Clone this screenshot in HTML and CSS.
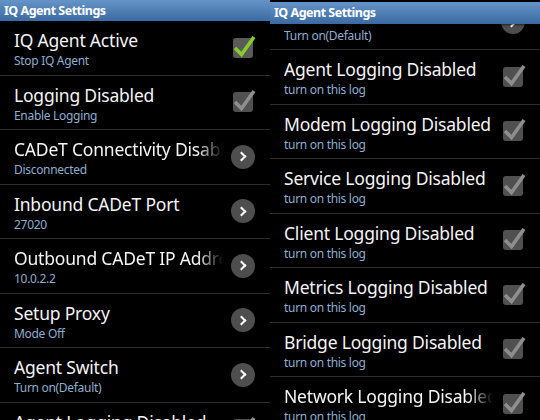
FILE: index.html
```html
<!DOCTYPE html>
<html lang="en">
<head>
  <meta charset="UTF-8">
  <title>IQ Agent Settings</title>
  <link rel="stylesheet" href="styles.css">
</head>
<body>
  <div class="screens">

    <!-- first screen: top of the settings list -->
    <section class="panel">
      <header class="titlebar">IQ Agent Settings</header>
      <div class="list">
        <div class="list-inner">
          <div class="pref">
            <div class="text"><div class="title">IQ Agent Active</div><div class="summary">Stop IQ Agent</div></div>
            <span class="widget"><svg class="check on" viewBox="0 0 24 24"><rect x="2" y="2" width="20" height="20" rx="3"/><path d="M4 12 L10.5 18.5 L23 1"/></svg></span>
          </div>
          <div class="pref">
            <div class="text"><div class="title">Logging Disabled</div><div class="summary">Enable Logging</div></div>
            <span class="widget"><svg class="check" viewBox="0 0 24 24"><rect x="2" y="2" width="20" height="20" rx="3"/><path d="M4 12 L10.5 18.5 L23 1"/></svg></span>
          </div>
          <div class="pref">
            <div class="text"><div class="title clip">CADeT Connectivity Disabled</div><div class="summary">Disconnected</div></div>
            <span class="widget"><span class="more"></span></span>
          </div>
          <div class="pref">
            <div class="text"><div class="title">Inbound CADeT Port</div><div class="summary">27020</div></div>
            <span class="widget"><span class="more"></span></span>
          </div>
          <div class="pref">
            <div class="text"><div class="title clip">Outbound CADeT IP Address</div><div class="summary">10.0.2.2</div></div>
            <span class="widget"><span class="more"></span></span>
          </div>
          <div class="pref">
            <div class="text"><div class="title">Setup Proxy</div><div class="summary">Mode Off</div></div>
            <span class="widget"><span class="more"></span></span>
          </div>
          <div class="pref">
            <div class="text"><div class="title">Agent Switch</div><div class="summary">Turn on(Default)</div></div>
            <span class="widget"><span class="more"></span></span>
          </div>
          <div class="pref">
            <div class="text"><div class="title">Agent Logging Disabled</div><div class="summary">turn on this log</div></div>
            <span class="widget"><svg class="check" viewBox="0 0 24 24"><rect x="2" y="2" width="20" height="20" rx="3"/><path d="M4 12 L10.5 18.5 L23 1"/></svg></span>
          </div>
        </div>
      </div>
    </section>

    <!-- second screen: same list scrolled down -->
    <section class="panel second">
      <header class="titlebar">IQ Agent Settings</header>
      <div class="list">
        <div class="list-inner scrolled">
          <div class="pref">
            <div class="text"><div class="title"></div><div class="summary">Turn on(Default)</div></div>
            <span class="widget"><span class="more"></span></span>
          </div>
          <div class="pref">
            <div class="text"><div class="title">Agent Logging Disabled</div><div class="summary">turn on this log</div></div>
            <span class="widget"><svg class="check" viewBox="0 0 24 24"><rect x="2" y="2" width="20" height="20" rx="3"/><path d="M4 12 L10.5 18.5 L23 1"/></svg></span>
          </div>
          <div class="pref">
            <div class="text"><div class="title">Modem Logging Disabled</div><div class="summary">turn on this log</div></div>
            <span class="widget"><svg class="check" viewBox="0 0 24 24"><rect x="2" y="2" width="20" height="20" rx="3"/><path d="M4 12 L10.5 18.5 L23 1"/></svg></span>
          </div>
          <div class="pref">
            <div class="text"><div class="title">Service Logging Disabled</div><div class="summary">turn on this log</div></div>
            <span class="widget"><svg class="check" viewBox="0 0 24 24"><rect x="2" y="2" width="20" height="20" rx="3"/><path d="M4 12 L10.5 18.5 L23 1"/></svg></span>
          </div>
          <div class="pref">
            <div class="text"><div class="title">Client Logging Disabled</div><div class="summary">turn on this log</div></div>
            <span class="widget"><svg class="check" viewBox="0 0 24 24"><rect x="2" y="2" width="20" height="20" rx="3"/><path d="M4 12 L10.5 18.5 L23 1"/></svg></span>
          </div>
          <div class="pref">
            <div class="text"><div class="title">Metrics Logging Disabled</div><div class="summary">turn on this log</div></div>
            <span class="widget"><svg class="check" viewBox="0 0 24 24"><rect x="2" y="2" width="20" height="20" rx="3"/><path d="M4 12 L10.5 18.5 L23 1"/></svg></span>
          </div>
          <div class="pref">
            <div class="text"><div class="title">Bridge Logging Disabled</div><div class="summary">turn on this log</div></div>
            <span class="widget"><svg class="check" viewBox="0 0 24 24"><rect x="2" y="2" width="20" height="20" rx="3"/><path d="M4 12 L10.5 18.5 L23 1"/></svg></span>
          </div>
          <div class="pref">
            <div class="text"><div class="title clip">Network Logging Disabled</div><div class="summary">turn on this log</div></div>
            <span class="widget"><svg class="check" viewBox="0 0 24 24"><rect x="2" y="2" width="20" height="20" rx="3"/><path d="M4 12 L10.5 18.5 L23 1"/></svg></span>
          </div>
        </div>
      </div>
    </section>

  </div>
</body>
</html>
```

FILE: styles.css
```css
body { margin: 0; background: #000; font-family: "Noto Sans", "Open Sans", sans-serif; }
.screens { display: grid; grid-template-columns: 270px 270px; width: 540px; height: 420px; overflow: hidden; }

.panel { display: flex; flex-direction: column; height: 420px; overflow: hidden; }
.titlebar {
  height: 21px; line-height: 21px; padding-left: 4px; flex: none;
  background: linear-gradient(#6594c8, #3a6aa1);
  color: #fff; font-size: 12.5px; font-weight: bold; letter-spacing: -0.5px;
  position: relative; z-index: 1;
}
.second .titlebar { margin-top: 2px; height: 22px; line-height: 22px; box-shadow: 0 1px 2px rgba(0,0,0,0.6); }

.list { flex: 1; overflow: hidden; }
.list-inner.scrolled { margin-top: -28.5px; }

.pref {
  display: flex; align-items: center; gap: 8px;
  box-sizing: border-box; height: 54.5px;
  padding: 2px 15px 0 14px;
  border-bottom: 1px solid #2e2e2e;
}
.text { flex: 1; min-width: 0; overflow: hidden; }
.title { font-size: 17.5px; line-height: 24px; height: 24px; color: #f4f4f4; white-space: nowrap; overflow: hidden; letter-spacing: -0.2px; }
.title.clip { -webkit-mask-image: linear-gradient(to right, #000 88%, transparent); mask-image: linear-gradient(to right, #000 88%, transparent); }
.summary { font-size: 12px; line-height: 17px; color: #8eaed0; white-space: nowrap; letter-spacing: -0.3px; }

.widget { flex: none; width: 24px; height: 24px; margin-top: -2px; }
.check { display: block; width: 24px; height: 24px; overflow: visible; }
.check rect { fill: #505050; }
.check path { fill: none; stroke: #8e8e8e; stroke-width: 3.6; }
.check.on rect { fill: #5a5a5a; }
.check.on path { stroke: #86cc2c; }

.more {
  display: flex; align-items: center; justify-content: center;
  width: 24px; height: 24px; border-radius: 50%;
  background: #4e4e4e;
}
.more::after {
  content: ""; width: 5px; height: 5px; margin-left: -3px;
  border-right: 2.5px solid #fff; border-bottom: 2.5px solid #fff;
  transform: rotate(-45deg);
}
```
